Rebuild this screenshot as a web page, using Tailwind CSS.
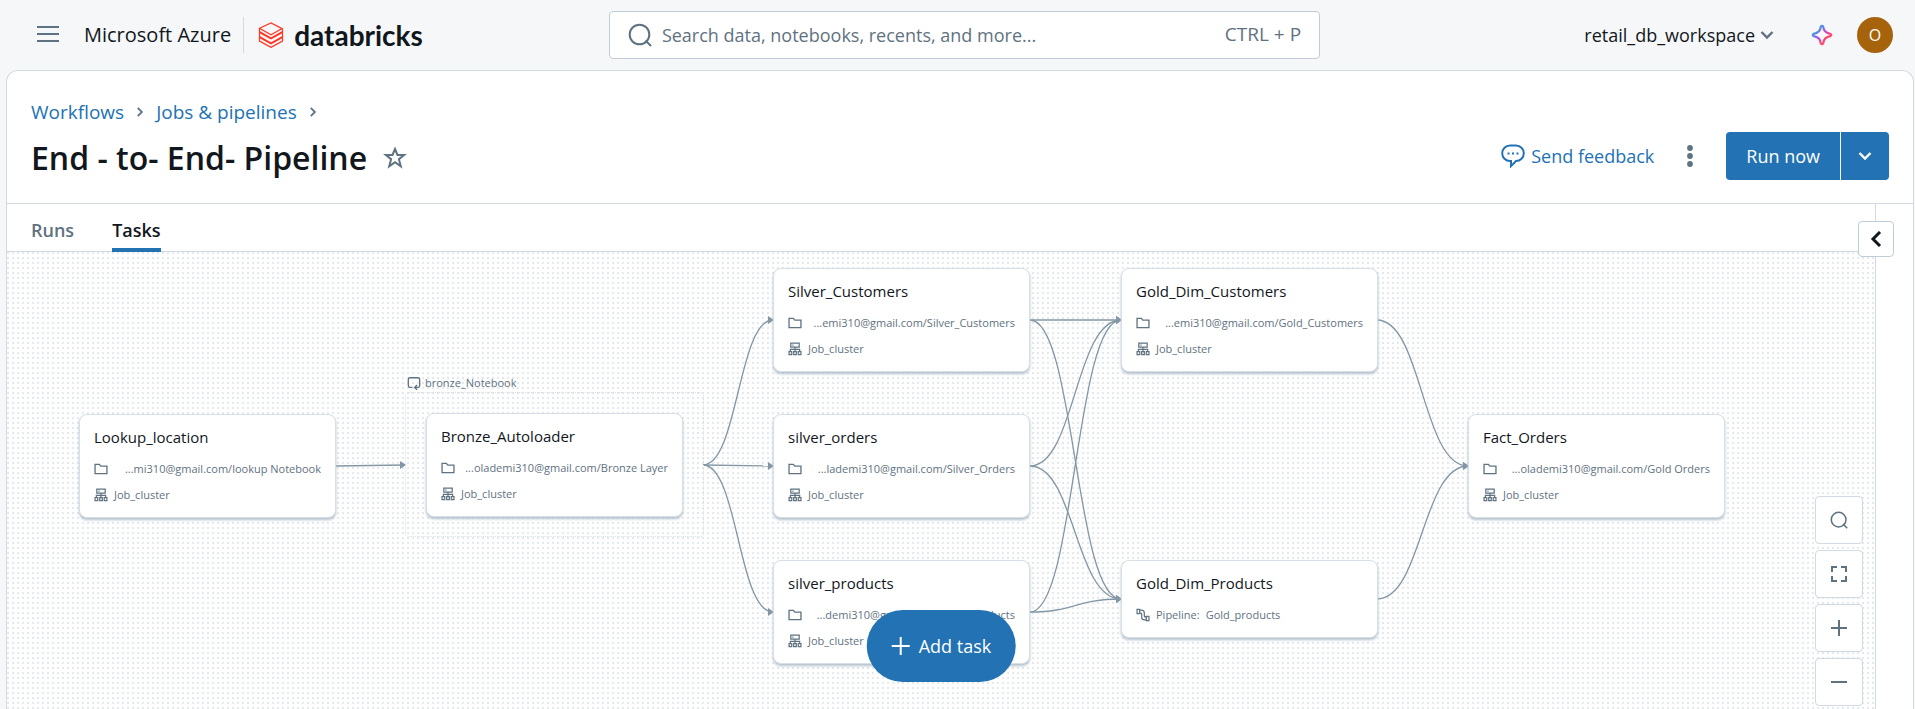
<!DOCTYPE html>
<html lang="en">
<head>
<meta charset="utf-8">
<title>End - to- End- Pipeline</title>
<script src="https://cdn.jsdelivr.net/npm/@tailwindcss/browser@4"></script>
</head>
<body class="flex h-screen flex-col overflow-hidden bg-[#f6f7f9] font-['Open_Sans','Noto_Sans',sans-serif] text-lg text-[#11171c]">

<!-- Icon definitions shared by the page -->
<svg class="hidden" aria-hidden="true">
  <symbol id="folder" viewBox="0 0 16 16"><path fill="none" stroke="currentColor" stroke-width="1.5" d="M1.2 2.7h4.9l1.700 2h7v8.600H1.200z"/></symbol>
  <symbol id="cluster" viewBox="0 0 16 16"><path fill="none" stroke="currentColor" stroke-width="1.400" d="M3.200 1.200h9.600v4.600H3.200zM5 3.500h1.400M8 6v4.500M2.700 10.500V8.300h10.600v2.200M1.200 11h3.100v3.500H1.200zM6.500 11h3v3.500h-3zM11.700 11h3.100v3.500h-3.100z"/></symbol>
  <symbol id="pipe" viewBox="0 0 16 16"><path fill="none" stroke="currentColor" stroke-width="1.400" d="M1.200 1.500h3v5h-3zM11.800 9.500h3v5h-3zM4.200 2.500h2c2.200 0 3.300 1.300 3.300 3.300v2.700c0 1.300.8 2 2.300 2M4.200 5.500c1.700 0 2.300.7 2.300 2v3c0 2 1.500 3 3.300 3h2"/></symbol>
  <symbol id="search" viewBox="0 0 24 24"><circle cx="11.500" cy="11.500" r="9.800" fill="none" stroke="currentColor" stroke-width="2"/><path stroke="currentColor" stroke-width="2" d="M17.500 17.500l5.500 5.500"/></symbol>
  <symbol id="chev" viewBox="0 0 16 16"><path fill="none" stroke="currentColor" stroke-width="2.400" d="M2.500 5l5.500 5.500L13.500 5"/></symbol>
</svg>

<header class="flex h-[70px] shrink-0 items-center pr-[22px] pl-9">
  <div class="flex flex-1 items-center">
    <button type="button" aria-label="Menu" class="text-[#5f7281]"><svg class="h-6 w-6" viewBox="0 0 24 24"><path stroke="currentColor" stroke-width="2" d="M1 4h22M1 11h22M1 18h22"/></svg></button>
    <span class="ml-6 text-xl">Microsoft Azure</span>
    <span class="ml-3 h-9 w-px bg-[#d1d9e1]"></span>
    <a href="#" class="ml-3.5 flex items-center gap-2.5">
      <svg class="h-[26px] w-[26px]" viewBox="0 0 26 26" fill="none" stroke="#ff3621" stroke-width="1.200"><path d="M24.500 6.300L13 12.800 1.500 6.300 13 .9l11.500 6M1.500 6.300v3.300L13 16l11.500-6.400v-3M1.500 10.500v4L13 20.900l11.500-6.400v-4L13 16.900zM1.500 15.500v3.600L13 25.400l11.500-6.300v-3.600L13 21.800z"/></svg>
      <span class="font-['Lato'] text-[28px] leading-8 font-bold">databricks</span>
    </a>
  </div>
  <form class="flex h-12 w-[38.3%] items-center rounded border border-[#c0cdd8] bg-white px-[18px] text-[#5f7281]">
    <svg class="h-6 w-6 shrink-0"><use href="#search"/></svg>
    <input type="search" aria-label="Search" placeholder="Search data, notebooks, recents, and more..." class="ml-2.5 min-w-0 flex-1 outline-none placeholder:text-[#5f7281]">
    <span class="text-[19px]">CTRL + P</span>
  </form>
  <div class="flex flex-1 items-center justify-end">
    <button type="button" class="flex items-center gap-1">retail_db_workspace<svg class="h-4 w-4 text-[#5f7281]"><use href="#chev"/></svg></button>
    <button type="button" aria-label="Assistant" class="ml-9">
      <svg class="h-[22px] w-[22px]" viewBox="0 0 22 22"><defs><linearGradient id="spark" x1="0" y1="0" x2="1" y2="1"><stop offset=".25" stop-color="#4a8fe8"/><stop offset=".5" stop-color="#c44bd6"/><stop offset=".75" stop-color="#ff4a5f"/></linearGradient></defs><path fill="none" stroke="url(#spark)" stroke-width="2.200" stroke-linejoin="round" d="M9.800 2.600q1.200-1.600 2.400 0c.4 3.600 2.100 6.500 7.200 7.200q1.600 1.200 0 2.400c-5.100.7-6.800 3.600-7.200 7.200q-1.200 1.600-2.400 0c-.4-3.600-2.100-6.500-7.200-7.200q-1.600-1.200 0-2.400c5.100-.7 6.800-3.600 7.200-7.200z"/></svg>
    </button>
    <button type="button" class="ml-6 h-9 w-9 rounded-full bg-[#a6630c] text-base text-white">O</button>
  </div>
</header>

<main class="mr-px ml-1.5 flex min-h-0 flex-1 flex-col rounded-t-xl border border-b-0 border-[#d1d9e1] bg-white">
  <div class="flex h-[133px] shrink-0 items-end justify-between border-b border-[#d1d9e1] pr-6 pb-[23px] pl-6">
    <div class="mb-0.5">
      <nav aria-label="Breadcrumb" class="flex items-center gap-2.5 text-[19px] leading-7 text-[#2272b4]">
        <a href="#">Workflows</a>
        <svg class="h-3 w-3 -rotate-90 text-[#5f7281]"><use href="#chev"/></svg>
        <a href="#">Jobs &amp; pipelines</a>
        <svg class="h-3 w-3 -rotate-90 text-[#5f7281]"><use href="#chev"/></svg>
      </nav>
      <div class="mt-3 flex items-center gap-4">
        <h1 class="text-[32px] leading-10 font-semibold">End - to- End- Pipeline</h1>
        <button type="button" aria-label="Favorite" class="text-[#5f7281]"><svg class="h-6 w-6" viewBox="0 0 24 24"><path fill="none" stroke="currentColor" stroke-width="2" d="M12 3l2.500 6h6.600l-5.200 4.200 1.900 7.100L12 16.300l-5.800 4 1.900-7.100L2.900 9h6.600z"/></svg></button>
      </div>
    </div>
    <div class="flex items-center">
      <a href="#" class="flex items-center gap-1.5 text-[#2272b4]"><svg class="h-6 w-6" viewBox="0 0 24 24"><path fill="none" stroke="currentColor" stroke-width="2" d="M9 1.500h6a7.800 7.800 0 0 1 0 15.600l-5 5v-5H9A7.800 7.800 0 0 1 9 1.500z"/><path stroke="currentColor" stroke-width="2" d="M6.500 9.500h2M11 9.500h2M15.500 9.500h2"/></svg>Send feedback</a>
      <button type="button" aria-label="More" class="ml-6 text-[#5f7281]"><svg class="h-6 w-6" viewBox="0 0 24 24" fill="currentColor"><circle cx="12" cy="4" r="2.900"/><circle cx="12" cy="12" r="2.900"/><circle cx="12" cy="20" r="2.900"/></svg></button>
      <div class="ml-6 flex h-12 overflow-hidden rounded bg-[#2272b4] text-white">
        <button type="button" class="border-r border-white px-5">Run now</button>
        <button type="button" aria-label="Run options" class="flex w-12 items-center justify-center"><svg class="h-4 w-4"><use href="#chev"/></svg></button>
      </div>
    </div>
  </div>

  <div class="flex min-h-0 flex-1">
    <section class="flex min-w-0 flex-1 flex-col border-r border-[#d1d9e1]">
      <div role="tablist" class="flex h-12 shrink-0 gap-[38px] border-b border-[#d1d9e1] pl-6 font-semibold">
        <button type="button" role="tab" class="pt-1 text-[#5f7281]">Runs</button>
        <button type="button" role="tab" aria-selected="true" class="-mb-px border-b-4 border-[#2272b4] pt-2">Tasks</button>
      </div>

      <!-- Task graph -->
      <div class="relative min-h-0 flex-1 overflow-hidden bg-[radial-gradient(circle_at_1px_1px,#e4e9ed_1px,transparent_1px)] bg-size-[5px_5px] text-[11px] text-[#5f7281]">
        <svg class="absolute inset-0 h-full w-full" fill="none" stroke="#8396a5" stroke-width="1.300">
          <defs><marker id="arrow" viewBox="0 0 6 8" markerWidth="6" markerHeight="8" refX="5" refY="4" orient="0" markerUnits="userSpaceOnUse"><path d="M0 0l6 4-6 4z" fill="#8396a5" stroke="none"/></marker></defs>
          <g marker-end="url(#arrow)">
            <path d="M328 214L398 213"/>
            <path d="M696 213C731 213 731 68 766 68"/>
            <path d="M696 213L766 214"/>
            <path d="M696 213C731 213 731 360 766 360"/>
            <path d="M1023 68H1114"/>
            <path d="M1023 68C1068 68 1068 347 1114 347"/>
            <path d="M1023 214C1068 214 1068 68 1114 68"/>
            <path d="M1023 214C1068 214 1068 347 1114 347"/>
            <path d="M1023 360C1068 360 1068 68 1114 68"/>
            <path d="M1023 360C1068 360 1068 347 1114 347"/>
            <path d="M1370 68C1415 68 1415 214 1461 214"/>
            <path d="M1370 347C1415 347 1415 214 1461 214"/>
          </g>
        </svg>

        <div class="absolute top-[121px] left-[400px] flex h-5 items-center gap-1"><svg class="h-3.5 w-3.5" viewBox="0 0 16 16" fill="none" stroke="currentColor" stroke-width="1.500"><path d="M6 13H3.500C2 13 1.500 12.300 1.500 11V4C1.500 2.500 2 2 3.500 2h9C14 2 14.500 2.500 14.500 4v7c0 1.500-.5 2-2 2H9M11.500 10.200L8.700 13l2.800 2.800"/></svg>bronze_Notebook</div>
        <div class="absolute top-[140px] left-[398px] h-[145px] w-[299px] rounded border border-dotted border-[#d8dfe5]"></div>

        <article class="absolute top-[162px] left-[72px] h-[104px] w-[257px] rounded-lg border border-[#d8e0e7] bg-white px-3.5 pt-2.5 shadow-[0_2px_3px_#b3c0cc]">
          <h2 class="text-[15px] leading-6 text-[#11171c]">Lookup_location</h2>
          <p class="mt-2.5 flex h-5 items-center justify-between whitespace-nowrap"><svg class="h-3.5 w-3.5"><use href="#folder"/></svg><span>...mi310@gmail.com/lookup Notebook</span></p>
          <p class="mt-1.5 flex h-5 items-center gap-1.5"><svg class="h-3.5 w-3.5"><use href="#cluster"/></svg>Job_cluster</p>
        </article>
        <article class="absolute top-[161px] left-[419px] h-[104px] w-[257px] rounded-lg border border-[#d8e0e7] bg-white px-3.5 pt-2.5 shadow-[0_2px_3px_#b3c0cc]">
          <h2 class="text-[15px] leading-6 text-[#11171c]">Bronze_Autoloader</h2>
          <p class="mt-2.5 flex h-5 items-center justify-between whitespace-nowrap"><svg class="h-3.5 w-3.5"><use href="#folder"/></svg><span>...olademi310@gmail.com/Bronze Layer</span></p>
          <p class="mt-1.5 flex h-5 items-center gap-1.5"><svg class="h-3.5 w-3.5"><use href="#cluster"/></svg>Job_cluster</p>
        </article>
        <article class="absolute top-[16px] left-[766px] h-[104px] w-[257px] rounded-lg border border-[#d8e0e7] bg-white px-3.5 pt-2.5 shadow-[0_2px_3px_#b3c0cc]">
          <h2 class="text-[15px] leading-6 text-[#11171c]">Silver_Customers</h2>
          <p class="mt-2.5 flex h-5 items-center justify-between whitespace-nowrap"><svg class="h-3.5 w-3.5"><use href="#folder"/></svg><span>...emi310@gmail.com/Silver_Customers</span></p>
          <p class="mt-1.5 flex h-5 items-center gap-1.5"><svg class="h-3.5 w-3.5"><use href="#cluster"/></svg>Job_cluster</p>
        </article>
        <article class="absolute top-[162px] left-[766px] h-[104px] w-[257px] rounded-lg border border-[#d8e0e7] bg-white px-3.5 pt-2.5 shadow-[0_2px_3px_#b3c0cc]">
          <h2 class="text-[15px] leading-6 text-[#11171c]">silver_orders</h2>
          <p class="mt-2.5 flex h-5 items-center justify-between whitespace-nowrap"><svg class="h-3.5 w-3.5"><use href="#folder"/></svg><span>...lademi310@gmail.com/Silver_Orders</span></p>
          <p class="mt-1.5 flex h-5 items-center gap-1.5"><svg class="h-3.5 w-3.5"><use href="#cluster"/></svg>Job_cluster</p>
        </article>
        <article class="absolute top-[308px] left-[766px] h-[104px] w-[257px] rounded-lg border border-[#d8e0e7] bg-white px-3.5 pt-2.5 shadow-[0_2px_3px_#b3c0cc]">
          <h2 class="text-[15px] leading-6 text-[#11171c]">silver_products</h2>
          <p class="mt-2.5 flex h-5 items-center justify-between whitespace-nowrap"><svg class="h-3.5 w-3.5"><use href="#folder"/></svg><span>...demi310@gmail.com/Silver_Products</span></p>
          <p class="mt-1.5 flex h-5 items-center gap-1.5"><svg class="h-3.5 w-3.5"><use href="#cluster"/></svg>Job_cluster</p>
        </article>
        <article class="absolute top-[16px] left-[1114px] h-[104px] w-[257px] rounded-lg border border-[#d8e0e7] bg-white px-3.5 pt-2.5 shadow-[0_2px_3px_#b3c0cc]">
          <h2 class="text-[15px] leading-6 text-[#11171c]">Gold_Dim_Customers</h2>
          <p class="mt-2.5 flex h-5 items-center justify-between whitespace-nowrap"><svg class="h-3.5 w-3.5"><use href="#folder"/></svg><span>...emi310@gmail.com/Gold_Customers</span></p>
          <p class="mt-1.5 flex h-5 items-center gap-1.5"><svg class="h-3.5 w-3.5"><use href="#cluster"/></svg>Job_cluster</p>
        </article>
        <article class="absolute top-[308px] left-[1114px] h-[78px] w-[257px] rounded-lg border border-[#d8e0e7] bg-white px-3.5 pt-2.5 shadow-[0_2px_3px_#b3c0cc]">
          <h2 class="text-[15px] leading-6 text-[#11171c]">Gold_Dim_Products</h2>
          <p class="mt-2.5 flex h-5 items-center gap-1.5"><svg class="h-3.5 w-3.5"><use href="#pipe"/></svg>Pipeline: <span>Gold_products</span></p>
        </article>
        <article class="absolute top-[162px] left-[1461px] h-[104px] w-[257px] rounded-lg border border-[#d8e0e7] bg-white px-3.5 pt-2.5 shadow-[0_2px_3px_#b3c0cc]">
          <h2 class="text-[15px] leading-6 text-[#11171c]">Fact_Orders</h2>
          <p class="mt-2.5 flex h-5 items-center justify-between whitespace-nowrap"><svg class="h-3.5 w-3.5"><use href="#folder"/></svg><span>...olademi310@gmail.com/Gold Orders</span></p>
          <p class="mt-1.5 flex h-5 items-center gap-1.5"><svg class="h-3.5 w-3.5"><use href="#cluster"/></svg>Job_cluster</p>
        </article>

        <button type="button" class="absolute bottom-[27px] left-1/2 flex h-[72px] -translate-x-1/2 items-center gap-2 rounded-full bg-[#2272b4] px-6 text-lg text-white"><svg class="h-5 w-5" viewBox="0 0 20 20"><path stroke="currentColor" stroke-width="2" d="M10 1v18M1 10h18"/></svg>Add task</button>

        <div class="absolute right-3 bottom-[3px] flex flex-col gap-1.5">
          <button type="button" aria-label="Find task" class="flex h-12 w-12 items-center justify-center rounded border border-[#d1d9e1] bg-white"><svg class="h-[18px] w-[18px]"><use href="#search"/></svg></button>
          <button type="button" aria-label="Fit to screen" class="flex h-12 w-12 items-center justify-center rounded border border-[#d1d9e1] bg-white"><svg class="h-4 w-4" viewBox="0 0 16 16"><path fill="none" stroke="currentColor" stroke-width="2" d="M1 6V1h5M10 1h5v5M15 10v5h-5M6 15H1v-5"/></svg></button>
          <button type="button" aria-label="Zoom in" class="flex h-12 w-12 items-center justify-center rounded border border-[#d1d9e1] bg-white"><svg class="h-4 w-4" viewBox="0 0 16 16"><path stroke="currentColor" stroke-width="2" d="M8 0v16M0 8h16"/></svg></button>
          <button type="button" aria-label="Zoom out" class="flex h-12 w-12 items-center justify-center rounded border border-[#d1d9e1] bg-white"><svg class="h-4 w-4" viewBox="0 0 16 16"><path stroke="currentColor" stroke-width="2" d="M0 8h16"/></svg></button>
        </div>
      </div>
    </section>
    <aside class="relative w-[37px] shrink-0">
      <button type="button" aria-label="Expand details" class="absolute top-[17px] -left-[18px] flex h-9 w-9 items-center justify-center rounded border border-[#c0cdd8] bg-white"><svg class="h-4 w-4" viewBox="0 0 16 16"><path fill="none" stroke="currentColor" stroke-width="3" d="M12 1L5 8l7 7"/></svg></button>
    </aside>
  </div>
</main>
</body>
</html>
